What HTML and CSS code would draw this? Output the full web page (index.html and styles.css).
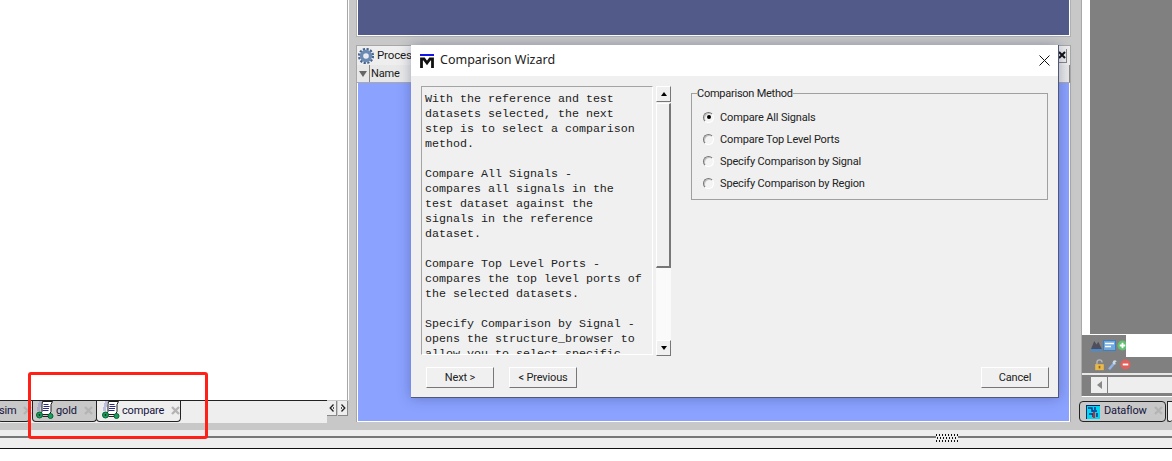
FILE: index.html
```html
<!DOCTYPE html>
<html lang="en">
<head>
<meta charset="utf-8">
<title>Comparison Wizard</title>
<link rel="stylesheet" href="styles.css">
</head>
<body>
<svg class="defs" width="0" height="0" aria-hidden="true">
  <symbol id="wave" viewBox="0 0 18 18">
    <path d="M3 1h3M2 3h3M2 5h3M1 7h3M1 9h3" stroke="#8f8fd0" stroke-width="1"/>
    <path d="M6.500.500h10l-1.500 3v7l-1.500 3h-9l1.500-3v-7z" fill="#fff" stroke="#1a1a1a" stroke-width="1"/>
    <path d="M7.500 3.500h5M7.500 5.500h6M7 7.500h6M6.500 9.500h6" stroke="#2a2a80" stroke-width="1"/>
    <circle cx="3.500" cy="14" r="3" fill="#1f9a5a" stroke="#063" stroke-width="1"/>
    <circle cx="3.500" cy="14" r=".9" fill="#0a3a20"/>
    <circle cx="14.500" cy="15" r="2.500" fill="#1f9a5a" stroke="#063" stroke-width="1"/>
    <path d="M6.500 15.500h5.500" stroke="#222" stroke-width="1"/>
  </symbol>
  <symbol id="closex" viewBox="0 0 9 9">
    <path d="M1 1l7 7M8 1L1 8" stroke="#b4b4b4" stroke-width="2.400"/>
  </symbol>
</svg>
<div class="app">
  <div class="workspace">
    <section class="left">
      <div class="source-view"></div>
      <div class="tabstrip">
        <div class="tab tab-cut"><span class="tab-label">sim</span><svg class="tab-x"><use href="#closex"/></svg></div>
        <div class="tab tab-gold"><svg class="wave-icon"><use href="#wave"/></svg><span class="tab-label">gold</span><svg class="tab-x"><use href="#closex"/></svg></div>
        <div class="tab tab-active"><svg class="wave-icon"><use href="#wave"/></svg><span class="tab-label">compare</span><svg class="tab-x"><use href="#closex"/></svg></div>
        <div class="tab-fill"></div>
        <div class="tab-arrows">
          <span class="arrow-btn"><svg class="chev" viewBox="0 0 6 8"><path d="M4.500.500L1.200 4 4.500 7.500" fill="none" stroke="#222" stroke-width="1.300"/><path d="M4 3h1v2H4z" fill="#555"/></svg></span>
          <span class="arrow-btn"><svg class="chev" viewBox="0 0 6 8"><path d="M1.500.500L4.800 4 1.500 7.500" fill="none" stroke="#222" stroke-width="1.300"/><path d="M1 3h1v2H1z" fill="#555"/></svg></span>
        </div>
      </div>
    </section>

    <section class="center">
      <div class="top-pane"></div>
      <div class="process-pane">
        <div class="pane-head">
          <svg class="gear" viewBox="0 0 16 16">
            <circle cx="8" cy="8" r="7" fill="none" stroke="#45628c" stroke-width="2.200" stroke-dasharray="2.200 1.500"/>
            <circle cx="8" cy="8" r="4.500" fill="none" stroke="#6a8ab4" stroke-width="3.400"/>
            <circle cx="8" cy="8" r="1.800" fill="#e6ecf5"/>
          </svg>
          <span class="pane-title">Processes</span>
          <span class="pane-close"><svg class="pane-close-x" viewBox="0 0 8 8"><path d="M1 1l6 6M7 1L1 7" stroke="#111" stroke-width="2"/></svg></span>
        </div>
        <div class="col-head">
          <span class="col-filter"></span>
          <span class="col-name">Name</span>
        </div>
        <div class="process-list"></div>
      </div>
    </section>

    <section class="right">
      <div class="right-pane">
        <div class="right-top"><div class="right-white"></div><div class="right-gray"></div></div>
        <div class="toolbar">
          <div class="tool-col">
            <div class="tool-row tool-row-a">
              <svg class="tool" viewBox="0 0 12 12"><path d="M0 10L3.500 1l2.500 4 2-3 4 8z" fill="#4e4e5c"/><path d="M0 11h12" stroke="#3f8fe0" stroke-width="2"/></svg>
              <svg class="tool tool-wide" viewBox="0 0 13 11"><rect x=".5" y=".5" width="12" height="10" fill="#6fa8dc" stroke="#3f7fc0"/><path d="M2 3.500h9M2 6.500h6" stroke="#fff" stroke-width="1.500"/></svg>
              <svg class="tool" viewBox="0 0 12 12"><circle cx="6" cy="6" r="5.500" fill="#5fc06f"/><path d="M3 6h6M6 3v6" stroke="#fff" stroke-width="2"/></svg>
            </div>
            <div class="tool-row tool-row-b">
              <svg class="tool tool-big" viewBox="0 0 12 14"><path d="M3 6V4a3 3 0 0 1 6 0" fill="none" stroke="#b8b8b8" stroke-width="1.500"/><rect x="1" y="6" width="10" height="7" fill="#eab94c"/><rect x="5" y="8" width="2" height="3" fill="#8a6a20"/></svg>
              <svg class="tool tool-big" viewBox="0 0 12 14"><path d="M2 12L8 5" stroke="#8fb4ea" stroke-width="3"/><path d="M7 2a3 3 0 0 1 4 1l-2 1 1 2-3 0-1-2z" fill="#d0d8e4"/></svg>
              <svg class="tool" viewBox="0 0 12 12"><circle cx="6" cy="6" r="5.500" fill="#e0605c"/><path d="M3 6h6" stroke="#fff" stroke-width="2"/></svg>
            </div>
          </div>
          <div class="tool-white"></div>
        </div>
        <div class="hscroll">
          <span class="hscroll-btn"><span class="tri-left"></span></span>
          <span class="hscroll-track"></span>
        </div>
      </div>
      <div class="right-tabs">
        <div class="tab tab-dataflow">
          <svg class="flow-icon" viewBox="0 0 14 14"><rect width="14" height="14" fill="#00d8f0"/><path d="M0 .5h14M.5 0v14" stroke="#002a6a"/><path d="M2 3h4v3h5M3 9h4v3M9 2v3M11 8v4" stroke="#003090" stroke-width="1.500" fill="none"/><path d="M7 7h2v6H7z" fill="#e02020"/></svg>
          <span class="tab-label">Dataflow</span><svg class="tab-x"><use href="#closex"/></svg>
        </div>
        <div class="tab tab-next"></div>
      </div>
    </section>
  </div>

  <div class="band-gray"></div>
  <div class="band-light"></div>
  <div class="band-split"><div class="grip"></div></div>
  <div class="band-lower"></div>
  <div class="band-black"></div>
  <div class="page-rest"></div>
</div>

<div class="dialog">
  <header class="dialog-title">
    <svg class="m-logo" viewBox="0 0 14 15"><path d="M0 1h14" stroke="#1414e6" stroke-width="2"/><path d="M1.500 14V5h2.500l3 4 3-4h2.500v9" fill="none" stroke="#111" stroke-width="2.800"/></svg>
    <span class="dialog-name">Comparison Wizard</span>
    <svg class="dialog-close" viewBox="0 0 11 11"><path d="M.5.500l10 10M10.500.500l-10 10" stroke="#111" stroke-width="1"/></svg>
  </header>
  <div class="dialog-body">
    <div class="dialog-main">
      <div class="help">
        <pre class="help-text">With the reference and test
datasets selected, the next
step is to select a comparison
method.

Compare All Signals -
compares all signals in the
test dataset against the
signals in the reference
dataset.

Compare Top Level Ports -
compares the top level ports of
the selected datasets.

Specify Comparison by Signal -
opens the structure_browser to
allow you to select specific</pre>
        <div class="vscroll">
          <span class="vs-btn"><span class="tri-up"></span></span>
          <span class="vs-thumb"></span>
          <span class="vs-track"></span>
          <span class="vs-btn"><span class="tri-down"></span></span>
        </div>
      </div>
      <fieldset class="method">
        <legend class="method-legend">Comparison Method</legend>
        <label class="radio-row"><span class="radio radio-on"></span>Compare All Signals</label>
        <label class="radio-row"><span class="radio"></span>Compare Top Level Ports</label>
        <label class="radio-row"><span class="radio"></span>Specify Comparison by Signal</label>
        <label class="radio-row"><span class="radio"></span>Specify Comparison by Region</label>
      </fieldset>
    </div>
    <footer class="dialog-foot">
      <button class="btn">Next &gt;</button>
      <button class="btn">&lt; Previous</button>
      <span class="foot-space"></span>
      <button class="btn">Cancel</button>
    </footer>
  </div>
</div>

<div class="annotation"></div>
</body>
</html>
```

FILE: styles.css
```css
* { box-sizing: border-box; }
html, body { margin: 0; padding: 0; }
body {
  width: 1172px;
  height: 461px;
  overflow: hidden;
  position: relative;
  background: #fff;
  font-family: Roboto, "Liberation Sans", sans-serif;
  font-size: 11px;
  letter-spacing: -.15px;
  color: #1a1a1a;
}
.defs { position: absolute; }
.app { display: flex; flex-direction: column; height: 461px; }
.workspace { display: flex; height: 423px; background: #c8c8c8; }

/* left column */
.left { width: 349px; display: flex; flex-direction: column; }
.source-view {
  height: 400px;
  background: #fff;
  box-shadow: inset -1px 0 0 #fff, inset -2px 0 0 #a8a8a8;
}
.tabstrip {
  height: 23px;
  display: flex;
  align-items: flex-start;
  background: #eee;
  border-top: 1px solid #222;
  width: 327px;
  position: relative;
}
.tab {
  height: 21px;
  display: flex;
  align-items: center;
  border: 1px solid #222;
  border-top: 0;
  border-radius: 0 0 4px 4px;
  background: #c8c8c8;
  white-space: nowrap;
  flex: none;
}
.tab-label { color: #14143c; position: relative; top: -1px; }
.tab-x { width: 9px; height: 9px; flex: none; position: relative; top: -1px; }
.tab-cut { width: 32px; margin-left: -2px; padding-left: 1px; border-left: 0; }
.tab-cut .tab-x { margin-left: 6px; }
.tab-gold { width: 65px; margin-left: 2px; padding-left: 3px; }
.tab-gold .tab-x { margin-left: 7px; }
.tab-active { width: 85px; margin-left: -1px; padding-left: 5px; background: #eee; }
.tab-active .tab-x { margin-left: 7px; }
.wave-icon { width: 18px; height: 18px; margin-right: 2px; flex: none; position: relative; top: -1px; }
.tab-fill { flex: 1; height: 21px; background: #eee; }
.tab-arrows { position: absolute; left: 327px; top: 0; display: flex; gap: 1px; height: 15px; width: 21px; background: #c8c8c8; }
.arrow-btn {
  width: 10px;
  height: 15px;
  background: #eee;
  border-right: 1px solid #888;
  border-bottom: 1px solid #888;
  display: flex;
  align-items: center;
  justify-content: center;
}
.chev { width: 6px; height: 8px; }

/* center column */
.center { width: 715px; margin-left: 7px; display: flex; flex-direction: column; }
.top-pane {
  height: 37px;
  background: #525a8a;
  border: 1px solid #b0b0b0;
  border-top: 0;
  box-shadow: inset 0 -1px 0 #fff, inset 1px 0 0 #fff, inset -1px 0 0 #fff;
}
.process-pane {
  margin-top: 8px;
  height: 377px;
  display: flex;
  flex-direction: column;
  border: 1px solid #a8a8a8;
  border-bottom: 0;
  background: #eee;
}
.pane-head { height: 19px; display: flex; align-items: center; padding-left: 1px; }
.gear { width: 16px; height: 16px; margin-right: 3px; }
.pane-title { font-size: 11.5px; position: relative; top: -1px; }
.pane-close {
  margin-left: auto;
  width: 9px;
  height: 14px;
  margin-right: 3px;
  border-right: 1px solid #888;
  border-bottom: 1px solid #888;
  display: flex;
  align-items: center;
  justify-content: center;
}
.pane-close-x { width: 8px; height: 8px; flex: none; }
.col-head { height: 18px; display: flex; align-items: center; background: #e8e8e8; border-bottom: 1px solid #aaa; border-right: 1px solid #888; }
.col-filter {
  width: 13px;
  height: 17px;
  position: relative;
  border-right: 1px solid #888;
  flex: none;
}
.col-filter::after {
  content: "";
  position: absolute;
  left: 2px;
  top: 6px;
  border-left: 4px solid transparent;
  border-right: 4px solid transparent;
  border-top: 6px solid #666;
}
.col-name { margin-left: 1px; }
.process-list { flex: 1; background: #8ba2ff; border: 1px solid #fff; border-top: 0; }

/* right column */
.right { margin-left: 10px; flex: 1; display: flex; flex-direction: column; min-width: 0; }
.right-pane { height: 397px; display: flex; flex-direction: column; background: #808080; border-left: 1px solid #a8a8a8; border-bottom: 1px solid #fff; }
.right-top { height: 335px; display: flex; border-bottom: 1px solid #fff; }
.right-white { width: 8px; background: #fff; }
.right-gray { flex: 1; background: #808080; }
.toolbar { height: 40px; display: flex; align-items: flex-start; border-bottom: 2px solid #e8e8e8; }
.tool-col { width: 44px; display: flex; flex-direction: column; }
.tool-white { width: 47px; height: 22px; background: #fff; }
.tool-row { display: flex; align-items: center; }
.tool-row-a { height: 21px; padding-left: 9px; gap: 1px; }
.tool-row-b { height: 17px; padding-left: 12px; gap: 2px; }
.tool { width: 11px; height: 11px; flex: none; }
.tool-wide { width: 13px; height: 11px; }
.tool-big { width: 11px; height: 12px; }
.hscroll { flex: 1; display: flex; padding: 2px 0 0 9px; gap: 1px; }
.hscroll-btn { width: 16px; height: 16px; background: #eee; display: flex; align-items: center; justify-content: center; }
.hscroll-track { flex: 1; height: 16px; background: #eee; }
.tri-left { border-top: 4px solid transparent; border-bottom: 4px solid transparent; border-right: 5px solid #888; }
.right-tabs { display: flex; gap: 1px; align-items: flex-start; padding-top: 4px; margin-left: -2px; }
.tab-dataflow { width: 87px; padding-left: 6px; border-top: 1px solid #222; border-radius: 4px; }
.tab-dataflow .tab-x { margin-left: 7px; }
.flow-icon { width: 14px; height: 14px; margin-right: 4px; }
.tab-next { flex: 1; border-right: 0; background: #eee; border-top: 1px solid #222; }

/* bottom bands */
.band-gray { height: 7px; background: #c8c8c8; }
.band-light { height: 6px; background: #eee; }
.band-split { height: 2px; background: #777; position: relative; }
.grip {
  position: absolute;
  left: 936px;
  top: -2px;
  width: 22px;
  height: 9px;
  background-color: #eee;
  background-image:
    radial-gradient(circle, #111 .7px, transparent .9px),
    radial-gradient(circle, #111 .7px, transparent .9px);
  background-size: 3px 6px;
  background-position: 2px -2px, 3px 1px;
}
.band-lower { height: 10px; background: #eee; }
.band-black { height: 1px; background: #111; }
.page-rest { flex: 1; background: #fff; }

/* dialog window */
.dialog {
  position: absolute;
  left: 411px;
  top: 45px;
  width: 648px;
  height: 353px;
  display: flex;
  flex-direction: column;
  background: #f0f0f0;
  border-right: 1px solid #505878;
  border-bottom: 1px solid #505878;
  box-shadow: 0 0 12px rgba(30, 40, 90, .35);
}
.dialog-title { height: 31px; flex: none; display: flex; align-items: center; background: #fff; padding: 0 9px; }
.m-logo { width: 14px; height: 15px; margin-right: 6px; flex: none; position: relative; top: 1px; }
.dialog-name { font-family: "Noto Sans", sans-serif; font-size: 12.5px; letter-spacing: 0; color: #222; position: relative; top: -1px; }
.dialog-close { width: 11px; height: 11px; margin-left: auto; margin-right: -1px; }
.dialog-body { flex: 1; display: flex; flex-direction: column; padding: 10px 9px 10px 10px; }
.dialog-main { display: flex; height: 270px; }
.help { width: 250px; display: flex; height: 270px; }
.help-text {
  margin: 0;
  width: 232px;
  height: 269px;
  padding: 5px 0 0 3px;
  overflow: hidden;
  font: 11.67px/15px "Liberation Mono", monospace;
  letter-spacing: 0;
  color: #222;
  background: #f0f0f0;
  border: 1px solid #a4a4a4;
  border-right-color: #fff;
  border-bottom-color: #fff;
}
.vscroll { width: 15px; margin-left: 3px; display: flex; flex-direction: column; height: 270px; }
.vs-btn {
  height: 16px;
  flex: none;
  display: flex;
  align-items: center;
  justify-content: center;
  background: #f0f0f0;
  border: 1px solid #fff;
  border-right-color: #777;
  border-bottom-color: #777;
}
.vs-thumb {
  height: 165px;
  flex: none;
  margin-top: 1px;
  background: #f0f0f0;
  border: 1px solid #fff;
  border-right: 2px solid #777;
  border-bottom: 2px solid #777;
}
.vs-track {
  flex: 1;
  background-color: #fafafa;
  background-image: radial-gradient(circle, #ddd .5px, transparent .6px);
  background-size: 2px 2px;
}
.tri-up { border-left: 3px solid transparent; border-right: 3px solid transparent; border-bottom: 4px solid #000; }
.tri-down { border-left: 3px solid transparent; border-right: 3px solid transparent; border-top: 4px solid #000; }
.method {
  width: 357px;
  height: 115px;
  margin: -1px 0 0 20px;
  padding: 5px 0 0 11px;
  border: 1px solid #a0a0a0;
  display: flex;
  flex-direction: column;
  min-width: 0;
}
.method-legend { padding: 2px 0 0; margin-left: -6px; letter-spacing: -.25px; line-height: 14px; color: #222; }
.radio-row { height: 22px; flex: none; display: flex; align-items: center; color: #222; }
.radio {
  width: 11px;
  height: 11px;
  margin: 0 6px 0 0;
  border-radius: 50%;
  border: 1px solid;
  border-color: #777 #fff #fff #777;
  background: #f4f4f4;
  box-shadow: inset 1px 1px 0 #c4c4c4;
  position: relative;
  flex: none;
}
.radio-on::after {
  content: "";
  position: absolute;
  left: 2.500px;
  top: 2.500px;
  width: 4px;
  height: 4px;
  border-radius: 50%;
  background: #000;
}
.dialog-foot { display: flex; gap: 15px; margin-top: 11px; padding-left: 5px; }
.foot-space { flex: 1; }
.btn {
  width: 68px;
  height: 21px;
  padding: 0;
  font: 11px Roboto, "Liberation Sans", sans-serif;
  letter-spacing: -.15px;
  color: #222;
  background: #f0f0f0;
  border: 1px solid #fff;
  border-right-color: #777;
  border-bottom-color: #777;
}

/* red hand-drawn mark on the screenshot */
.annotation {
  position: absolute;
  left: 28px;
  top: 372px;
  width: 180px;
  height: 67px;
  border: 3px solid #ff2018;
  border-radius: 3px;
}
```
